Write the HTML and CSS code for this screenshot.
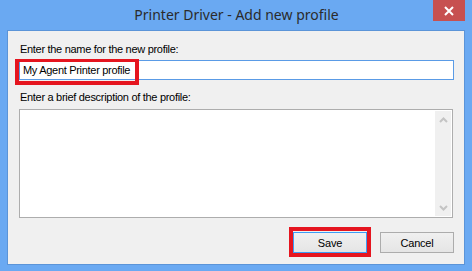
FILE: index.html
```html
<!DOCTYPE html>
<html lang="en">

<head>
    <meta charset="UTF-8">
    <meta name="viewport" content="width=device-width, initial-scale=1.0">
    <title>Printer Driver - Add new profile</title>
    <link rel="stylesheet" href="styles.css">
</head>

<body>
    <div class="window">
        <div class="titlebar">
            <span></span>
            <h1 class="title">Printer Driver - Add new profile</h1>
            <button class="closeBtn" aria-label="Close">
                <svg width="10" height="10" viewBox="0 0 10 10">
                    <path d="M1 1 L9 9 M9 1 L1 9" stroke="#fff" stroke-width="2" />
                </svg>
            </button>
        </div>

        <div class="client">
            <label class="label label-name" for="profileName">Enter the name for the new profile:</label>
            <div class="field">
                <input type="text" id="profileName" class="nameInput" value="My Agent Printer profile">
                <span class="mark mark-input"></span>
            </div>

            <label class="label label-desc">Enter a brief description of the profile:</label>
            <div class="descBox">
                <div class="descText"></div>
                <div class="scrollbar">
                    <svg width="9" height="6" viewBox="0 0 9 6">
                        <path d="M1 5 L4.5 1.5 L8 5" fill="none" stroke="#c4c4c4" stroke-width="2" />
                    </svg>
                    <svg width="9" height="6" viewBox="0 0 9 6">
                        <path d="M1 1 L4.5 4.5 L8 1" fill="none" stroke="#c4c4c4" stroke-width="2" />
                    </svg>
                </div>
            </div>

            <div class="buttons">
                <div class="field">
                    <button class="btn btn-default">Save</button>
                    <span class="mark mark-save"></span>
                </div>
                <button class="btn">Cancel</button>
            </div>
        </div>
    </div>
</body>

</html>
```

FILE: styles.css
```css
* {
    margin: 0;
    padding: 0;
    box-sizing: border-box;
}

body {
    background-color: #6aa9f2;
    font-family: "Liberation Sans", Arial, sans-serif;
    font-size: 11px;
    letter-spacing: -0.3px;
    color: #000;
}

.window {
    width: 472px;
    height: 271px;
    display: flex;
    flex-direction: column;
    padding: 0 7px 6px 7px;
}

.titlebar {
    height: 30px;
    display: grid;
    grid-template-columns: 1fr auto 1fr;
    align-items: start;
}

.title {
    font-family: "Noto Sans", "Open Sans", sans-serif;
    font-weight: normal;
    font-size: 14px;
    letter-spacing: 0;
    line-height: 30px;
    color: #2b2b2b;
    padding-left: 1px;
}

.closeBtn {
    justify-self: end;
    width: 32px;
    height: 21px;
    border: none;
    background-color: #c75050;
    display: flex;
    justify-content: center;
    align-items: center;
}

.client {
    flex: 1;
    background-color: #f0f0f0;
    border: 1px solid #5b94d8;
    padding: 11px 10px 0 11px;
    display: flex;
    flex-direction: column;
}

.label {
    display: block;
    height: 14px;
    line-height: 14px;
    padding-left: 1px;
}

.label-name {
    margin-bottom: 4px;
}

.label-desc {
    margin-top: 10px;
    margin-bottom: 5px;
}

.field {
    position: relative;
}

.nameInput {
    display: block;
    width: 435px;
    height: 20px;
    border: 1px solid #5a9be6;
    background-color: #fff;
    padding-left: 3px;
    font-family: "Liberation Sans", Arial, sans-serif;
    font-size: 11px;
    letter-spacing: -0.3px;
    color: #000;
    outline: none;
}

.mark {
    position: absolute;
    border: 4px solid #e5151f;
    pointer-events: none;
}

.mark-input {
    left: -4px;
    top: -1px;
    width: 124px;
    height: 26px;
    border-top-width: 3px;
}

.descBox {
    width: 434px;
    height: 109px;
    border: 1px solid #adadad;
    background-color: #fff;
    display: flex;
    padding: 1px 1px 1px 0;
}

.descText {
    flex: 1;
}

.scrollbar {
    width: 16px;
    background-color: #f0f0f0;
    display: flex;
    flex-direction: column;
    justify-content: space-between;
    align-items: center;
    padding: 6px 0 5px 1px;
}

.buttons {
    display: flex;
    justify-content: flex-end;
    gap: 13px;
    margin-top: 14px;
}

.btn {
    width: 74px;
    height: 21px;
    border: 1px solid #acacac;
    background: linear-gradient(#f0f0f0, #e5e5e5);
    font-family: "Liberation Sans", Arial, sans-serif;
    font-size: 11px;
    letter-spacing: -0.2px;
    color: #000;
}

.btn-default {
    display: block;
    border-color: #3c9cf5;
}

.mark-save {
    left: -4px;
    top: -5px;
    width: 82px;
    height: 30px;
}
```
